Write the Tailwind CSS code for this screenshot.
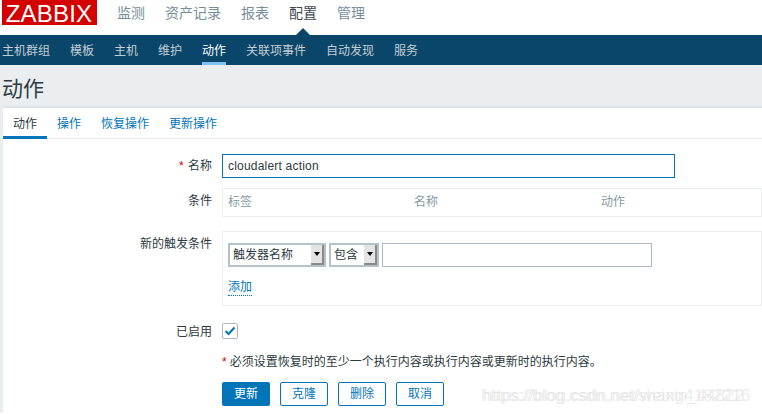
<!DOCTYPE html>
<html lang="zh">
<head>
    <meta charset="UTF-8">
    <title>动作</title>
    <script src="https://cdn.jsdelivr.net/npm/@tailwindcss/browser@4"></script>
</head>
<body class="relative w-[762px] h-[414px] overflow-hidden bg-white font-['Liberation_Sans','Noto_Sans_CJK_SC',sans-serif] text-xs text-[#2b3a42]">
    <!-- top menu -->
    <header class="h-[35px] flex items-start pl-[2px]">
        <div class="w-[95px] h-[25px] pr-[1px] bg-[#d40000] text-white text-[24px] leading-[27px] text-center tracking-[0.2px]">ZABBIX</div>
        <nav class="flex gap-5 ml-5 text-sm text-[#768d99] leading-[27px]">
            <a>监测</a>
            <a>资产记录</a>
            <a>报表</a>
            <a class="relative text-[#3a4a52]">配置
                <span class="absolute left-[6px] top-[28px] w-0 h-0 border-x-[8px] border-x-transparent border-b-[8px] border-b-[#0a466a]"></span>
            </a>
            <a>管理</a>
        </nav>
    </header>

    <!-- sub menu -->
    <nav class="h-[30px] bg-[#0a466a] flex gap-5 pl-[2px] text-[#c3ced5] leading-[32px]">
        <a>主机群组</a>
        <a>模板</a>
        <a>主机</a>
        <a>维护</a>
        <a class="text-white border-b-[3px] border-[#7fc4f0] h-[30px]">动作</a>
        <a>关联项事件</a>
        <a>自动发现</a>
        <a>服务</a>
    </nav>

    <!-- title -->
    <div class="h-[41px] bg-[#ebeef0] pl-[2px] text-[21px] leading-[48px] text-[#2c3a42]">动作</div>

    <div class="bg-[#ebeef0] pl-[3px]">
        <div class="bg-white border-t-2 border-[#dfe4e7] h-[307px]">
            <!-- tabs -->
            <div class="h-[30px] flex border-b border-[#ebeef0] text-[#0275b8] box-content">
                <a class="h-[31px] px-[10px] leading-[32px] border-b-[3px] border-[#0275b8] w-11 text-[#2b3a42]">动作</a>
                <a class="px-[10px] leading-[32px]">操作</a>
                <a class="px-[10px] leading-[32px]">恢复操作</a>
                <a class="px-[10px] leading-[32px]">更新操作</a>
            </div>

            <!-- form -->
            <div class="grid grid-cols-[209px_540px] gap-x-[10px] pt-[15px]">
                <label class="h-6 text-right leading-[25px]"><span class="text-[#d40000] mr-[1px]">*</span> 名称</label>
                <div><input value="cloudalert action" class="block w-[453px] h-6 px-[5px] border border-[#0275b8] text-xs tracking-[0.2px] text-[#2b3a42] outline-none"></div>

                <label class="text-right leading-[26px] mt-[10px]">条件</label>
                <div class="mt-[10px] h-[29px] border border-[#ebeef0] flex pl-[5px] leading-[27px] text-[#869aa5]">
                    <span class="w-[186px]">标签</span>
                    <span class="w-[187px]">名称</span>
                    <span>动作</span>
                </div>

                <label class="text-right leading-[26px] mt-[14px]">新的触发条件</label>
                <div class="mt-[14px] h-[75px] border border-[#ebeef0] pl-[5px] pt-[11px]">
                    <div class="flex gap-[3px]">
                        <div class="w-[98px] h-6 border-2 border-[#b4c2ca] flex items-center justify-between pl-[3px] relative">
                            <span>触发器名称</span>
                            <span class="w-[13px] h-[20px] bg-[#e4e4e4] border-r-2 border-b-2 border-[#8a8a8a] flex items-center justify-center">
                                <span class="w-0 h-0 border-x-[3px] border-x-transparent border-t-[4px] border-t-black"></span>
                            </span>
                        </div>
                        <div class="w-[50px] h-6 border-2 border-[#b4c2ca] flex items-center justify-between pl-[3px]">
                            <span>包含</span>
                            <span class="w-[13px] h-[20px] bg-[#e4e4e4] border-r-2 border-b-2 border-[#8a8a8a] flex items-center justify-center">
                                <span class="w-0 h-0 border-x-[3px] border-x-transparent border-t-[4px] border-t-black"></span>
                            </span>
                        </div>
                        <input class="block w-[270px] h-6 border border-[#a9bac3] outline-none">
                    </div>
                    <a class="inline-block mt-[12px] text-[#0275b8] leading-[16px] border-b border-dotted border-[#0275b8]">添加</a>
                </div>

                <label class="h-4 text-right leading-[18px] mt-[17px]">已启用</label>
                <div class="mt-[17px]">
                    <div class="w-4 h-4 border border-[#a9bac3] rounded-[2px] flex items-center justify-center">
                        <svg width="12" height="10" viewBox="0 0 12 10" fill="none"><path d="M1.5 5l3 3 6-6.5" stroke="#0275b8" stroke-width="2"/></svg>
                    </div>
                </div>

                <div></div>
                <p class="mt-[15px] leading-[16px]"><span class="text-[#d40000] mr-[3px]">*</span>必须设置恢复时的至少一个执行内容或执行内容或更新时的执行内容。</p>

                <div></div>
                <div class="mt-[12px] flex gap-[10px] text-[#0275b8]">
                    <button class="w-12 h-6 bg-[#0275b8] text-white rounded-[2px]">更新</button>
                    <button class="w-12 h-6 border border-[#0275b8] rounded-[2px]">克隆</button>
                    <button class="w-12 h-6 border border-[#0275b8] rounded-[2px]">删除</button>
                    <button class="w-12 h-6 border border-[#0275b8] rounded-[2px]">取消</button>
                </div>
            </div>
        </div>
    </div>

    <!-- watermark -->
    <span class="absolute left-[481px] top-[387px] text-[17px] leading-[17px] text-[#e0e0e0]/60 whitespace-nowrap">https://blog.csdn.net/shang4182216</span>
    <span class="absolute left-[483px] top-[387px] text-[17px] leading-[17px] text-[#e0e0e0]/60 whitespace-nowrap">https://blog.csdn.net/weixin_44822</span>
</body>
</html>
